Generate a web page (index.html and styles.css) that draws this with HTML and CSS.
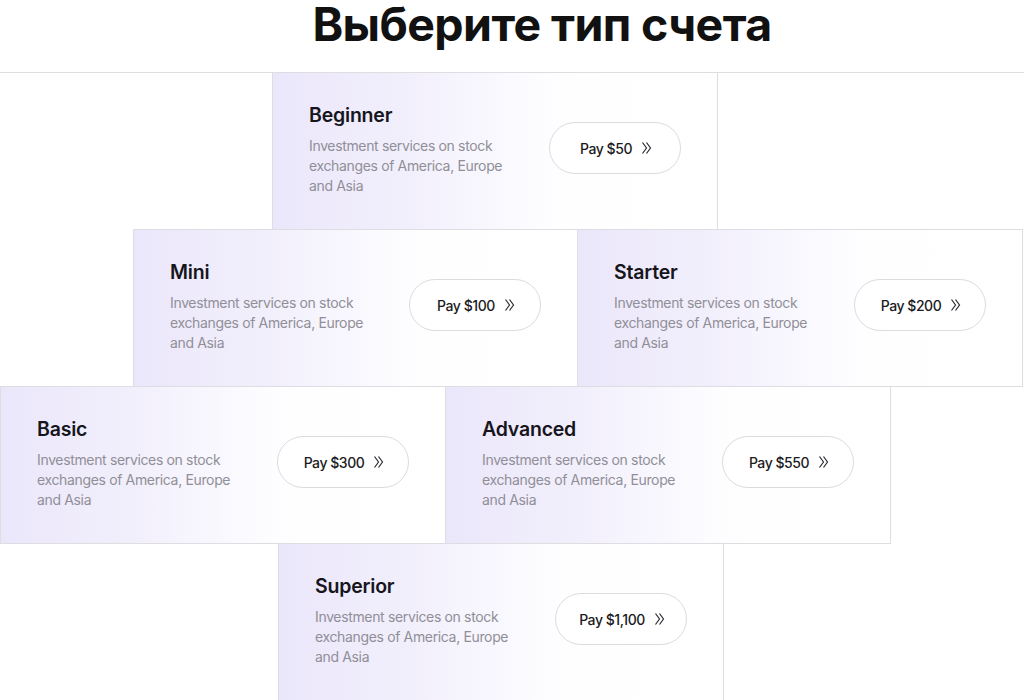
FILE: index.html
```html
<!DOCTYPE html>
<html lang="ru">
<head>
<meta charset="utf-8">
<title>Выберите тип счета</title>
<link rel="stylesheet" href="styles.css">
</head>
<body>
<header class="header">
  <h1 class="title">Выберите тип счета</h1>
</header>
<main class="plans">
  <div class="row row-1">
    <div class="card">
      <div class="info">
        <h2 class="name">Beginner</h2>
        <p class="desc">Investment services on stock exchanges of America, Europe and Asia</p>
      </div>
      <button class="pay">Pay $50 <svg class="chev" viewBox="0 0 11 14"><path d="M1.5 1.5l4 5.5-4 5.5M5.5 1.5l4 5.5-4 5.5"/></svg></button>
    </div>
  </div>
  <div class="row row-2">
    <div class="card">
      <div class="info">
        <h2 class="name">Mini</h2>
        <p class="desc">Investment services on stock exchanges of America, Europe and Asia</p>
      </div>
      <button class="pay">Pay $100 <svg class="chev" viewBox="0 0 11 14"><path d="M1.5 1.5l4 5.5-4 5.5M5.5 1.5l4 5.5-4 5.5"/></svg></button>
    </div>
    <div class="card">
      <div class="info">
        <h2 class="name">Starter</h2>
        <p class="desc">Investment services on stock exchanges of America, Europe and Asia</p>
      </div>
      <button class="pay">Pay $200 <svg class="chev" viewBox="0 0 11 14"><path d="M1.5 1.5l4 5.5-4 5.5M5.5 1.5l4 5.5-4 5.5"/></svg></button>
    </div>
  </div>
  <div class="row row-3">
    <div class="card">
      <div class="info">
        <h2 class="name">Basic</h2>
        <p class="desc">Investment services on stock exchanges of America, Europe and Asia</p>
      </div>
      <button class="pay">Pay $300 <svg class="chev" viewBox="0 0 11 14"><path d="M1.5 1.5l4 5.5-4 5.5M5.5 1.5l4 5.5-4 5.5"/></svg></button>
    </div>
    <div class="card">
      <div class="info">
        <h2 class="name">Advanced</h2>
        <p class="desc">Investment services on stock exchanges of America, Europe and Asia</p>
      </div>
      <button class="pay">Pay $550 <svg class="chev" viewBox="0 0 11 14"><path d="M1.5 1.5l4 5.5-4 5.5M5.5 1.5l4 5.5-4 5.5"/></svg></button>
    </div>
  </div>
  <div class="row row-4">
    <div class="card">
      <div class="info">
        <h2 class="name">Superior</h2>
        <p class="desc">Investment services on stock exchanges of America, Europe and Asia</p>
      </div>
      <button class="pay">Pay $1,100 <svg class="chev" viewBox="0 0 11 14"><path d="M1.5 1.5l4 5.5-4 5.5M5.5 1.5l4 5.5-4 5.5"/></svg></button>
    </div>
  </div>
</main>
</body>
</html>
```
FILE: styles.css
```css
* { box-sizing: border-box; }
html, body { margin: 0; padding: 0; background: #fff; }
body {
  font-family: Inter, "Noto Sans", "Liberation Sans", sans-serif;
  color: #16151c;
  overflow: hidden;
}
.header {
  height: 73px;
  border-bottom: 1px solid #dedde2;
  display: flex;
  justify-content: center;
}
.title {
  margin: 0;
  padding: 2px 0 0 60px;
  font-size: 46.5px;
  line-height: 44px;
  font-weight: 700;
  letter-spacing: -0.6px;
  color: #111;
}
.plans { display: flex; flex-direction: column; }
.row { display: flex; margin-top: -1px; }
.row-1 { padding-left: 272px; }
.row-2 { padding-left: 133px; }
.row-3 { padding-left: 0; }
.row-4 { padding-left: 278px; }
.card {
  width: 446px;
  height: 158px;
  border: 1px solid #dedde2;
  background: linear-gradient(90deg, #ebe7fb 0%, #f2effc 30%, #f9f8fe 50%, #fefeff 64%, #ffffff 100%);
  display: flex;
  align-items: flex-start;
  justify-content: space-between;
  padding: 29px 36px 0 36px;
}
.card + .card { margin-left: -1px; }
.row-2 .card:first-child { width: 445px; }
.info { width: 215px; }
.name {
  margin: 0;
  font-size: 19.5px;
  line-height: 26px;
  font-weight: 600;
  letter-spacing: -0.2px;
  color: #16151c;
}
.desc {
  margin: 8px 0 0;
  font-size: 14px;
  line-height: 20px;
  color: #908f97;
  letter-spacing: -0.35px;
  width: 200px;
}
.pay {
  margin-top: 20px;
  width: 132px;
  height: 52px;
  border: 1px solid #dcdbe0;
  border-radius: 26px;
  background: #fff;
  font-family: inherit;
  font-size: 14px;
  font-weight: 500;
  letter-spacing: -0.45px;
  color: #1b1a22;
  display: flex;
  align-items: center;
  justify-content: center;
  gap: 9px;
  padding: 0 0 0 2px;
}
.chev {
  width: 11px;
  height: 14px;
  fill: none;
  stroke: #2a2930;
  stroke-width: 1.2;
}
```
